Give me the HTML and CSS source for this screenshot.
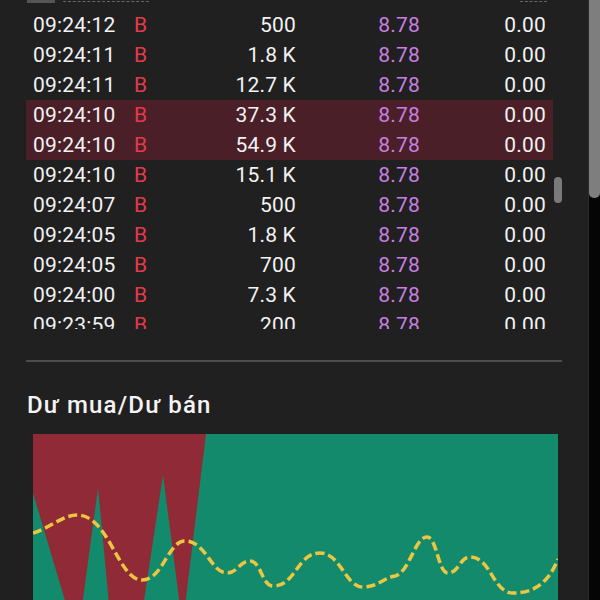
FILE: index.html
```html
<!DOCTYPE html>
<html lang="vi">

<head>
    <meta charset="UTF-8">
    <meta name="viewport" content="width=device-width, initial-scale=1.0">
    <title>Khớp lệnh</title>
    <link rel="stylesheet" href="styles.css">
</head>

<body>
    <div class="page">
        <div class="main">
            <div class="list-head">
                <span class="head-tab"></span>
                <span class="head-dash"></span>
                <span class="head-dash head-dash-right"></span>
            </div>

            <div class="trade-box">
                <div class="trade-list">
                    <div class="trade-row"><span>09:24:12</span><span class="side">B</span><span class="num">500</span><span class="num price">8.78</span><span class="num">0.00</span></div>
                    <div class="trade-row"><span>09:24:11</span><span class="side">B</span><span class="num">1.8 K</span><span class="num price">8.78</span><span class="num">0.00</span></div>
                    <div class="trade-row"><span>09:24:11</span><span class="side">B</span><span class="num">12.7 K</span><span class="num price">8.78</span><span class="num">0.00</span></div>
                    <div class="trade-row big"><span>09:24:10</span><span class="side">B</span><span class="num">37.3 K</span><span class="num price">8.78</span><span class="num">0.00</span></div>
                    <div class="trade-row big"><span>09:24:10</span><span class="side">B</span><span class="num">54.9 K</span><span class="num price">8.78</span><span class="num">0.00</span></div>
                    <div class="trade-row"><span>09:24:10</span><span class="side">B</span><span class="num">15.1 K</span><span class="num price">8.78</span><span class="num">0.00</span></div>
                    <div class="trade-row"><span>09:24:07</span><span class="side">B</span><span class="num">500</span><span class="num price">8.78</span><span class="num">0.00</span></div>
                    <div class="trade-row"><span>09:24:05</span><span class="side">B</span><span class="num">1.8 K</span><span class="num price">8.78</span><span class="num">0.00</span></div>
                    <div class="trade-row"><span>09:24:05</span><span class="side">B</span><span class="num">700</span><span class="num price">8.78</span><span class="num">0.00</span></div>
                    <div class="trade-row"><span>09:24:00</span><span class="side">B</span><span class="num">7.3 K</span><span class="num price">8.78</span><span class="num">0.00</span></div>
                    <div class="trade-row"><span>09:23:59</span><span class="side">B</span><span class="num">200</span><span class="num price">8.78</span><span class="num">0.00</span></div>
                </div>
                <div class="list-rail"><span class="list-thumb"></span></div>
            </div>

            <div class="divider"></div>

            <h2 class="section-title">Dư mua/Dư bán</h2>

            <div class="chart">
                <svg width="525" height="180" viewBox="0 0 525 180">
                    <rect x="0" y="0" width="525" height="180" fill="#138a6c" />
                    <polygon fill="#8f2a36"
                        points="0,0 173,0 151,180 148,180 130,41 109,180 77,180 65,54 48,180 36,180 0,59" />
                    <path d="M0,99 C15,95 30,81 44,81 C76,81 85,146 109,146 C130,146 135,107 152,107 C173,107 178,139 194,139 C205,139 206,127 217,127 C228,127 229,152 240,152 C263,152 264,119 287,119 C308,119 312,153 330,153 C345,153 350,144 362,142 C376,139 382,103 394,103 C404,103 405,139 415,139 C426,139 427,123 437,123 C458,123 460,159 480,159 C500,159 515,150 525,125"
                        fill="none" stroke="#ecc640" stroke-width="3.5" stroke-dasharray="9 4" />
                </svg>
            </div>
        </div>

        <div class="page-rail"><span class="page-thumb"></span></div>
    </div>
</body>

</html>
```

FILE: styles.css
```css
body {
    margin: 0;
    background-color: #202020;
    font-family: Roboto, "Noto Sans", sans-serif;
    color: #f2f2f2;
    overflow: hidden;
}

.page {
    display: flex;
    height: 600px;
    overflow: hidden;
}

.main {
    flex: 1;
    padding-left: 26px;
    padding-right: 26px;
}

.list-head {
    position: relative;
    height: 10px;
}

.head-tab {
    position: absolute;
    left: 1px;
    top: 0;
    width: 28px;
    height: 3px;
    background-color: #555;
}

.head-dash {
    position: absolute;
    left: 37px;
    top: 1px;
    width: 86px;
    border-top: 1px dashed #666;
}

.head-dash-right {
    left: 494px;
    width: 27px;
}

.trade-box {
    display: flex;
    height: 319px;
    overflow: hidden;
}

.trade-list {
    width: 527px;
}

.trade-row {
    display: grid;
    grid-template-columns: 101px 42px 120px 124px 126px;
    align-items: center;
    height: 30px;
    padding: 0 7px;
    font-size: 21px;
    letter-spacing: 0.2px;
    white-space: nowrap;
}

.trade-row.big {
    background-color: #4a1f28;
}

.side {
    color: #e33a4b;
}

.num {
    text-align: right;
}

.price {
    color: #c97fe2;
}

.list-rail {
    width: 9px;
    padding-top: 167px;
    display: flex;
    justify-content: flex-end;
    align-items: flex-start;
}

.list-thumb {
    width: 8px;
    height: 26px;
    border-radius: 4px;
    background-color: #7a7a7a;
}

.divider {
    margin-top: 31px;
    height: 2px;
    background-color: #4c4c4c;
}

.section-title {
    margin: 31px 0 17px 1px;
    font-size: 24px;
    line-height: 24px;
    font-weight: 500;
    letter-spacing: 1.2px;
    color: #f4f4f4;
}

.chart {
    margin-left: 7px;
    width: 525px;
}

.chart svg {
    display: block;
}

.page-rail {
    width: 11px;
    border-left: 1px solid #2c2c2c;
    background-color: #050505;
}

.page-thumb {
    display: block;
    height: 198px;
    border-radius: 0 0 5px 5px;
    background-color: #7e7e7e;
}
```
